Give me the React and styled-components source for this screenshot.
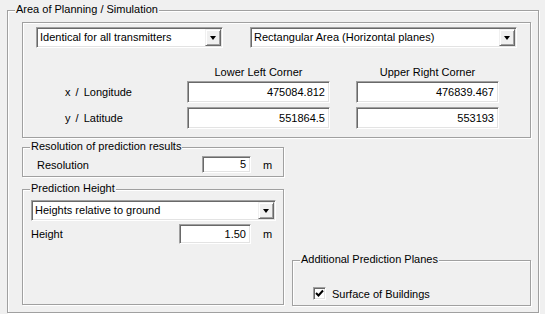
import React from "react";
import styled, { createGlobalStyle } from "styled-components";

const Global = createGlobalStyle`
  html, body {
    margin: 0;
    background: #f0f0f0;
  }
  body {
    font-family: "Liberation Sans", Arial, sans-serif;
    font-size: 11px;
    color: #000;
  }
`;

const Page = styled.div`
  width: 545px;
  height: 314px;
  padding: 10px 0 0 7px;
  box-sizing: border-box;
`;

const Group = styled.div`
  position: relative;
  box-sizing: border-box;
  border: 1px solid #a0a0a0;
  box-shadow: inset 1px 1px #fff, 1px 1px #fff;
  width: ${({ w }) => w}px;
  height: ${({ h }) => h}px;
`;

const Caption = styled.span`
  position: absolute;
  top: -9px;
  left: 7px;
  padding: 0 1px;
  line-height: 14px;
  background: #f0f0f0;
  white-space: nowrap;
`;

const OuterBody = styled.div`
  display: flex;
  flex-direction: column;
  padding: 11px 7px 0 14px;
`;

const AreaBody = styled.div`
  padding: 4px 0 0 13px;
`;

const ComboRow = styled.div`
  display: flex;
  gap: 27px;
`;

const ComboBox = styled.div`
  box-sizing: border-box;
  width: ${({ w }) => w}px;
  height: 21px;
  display: flex;
  align-items: center;
  background: #fff;
  border: 1px solid;
  border-color: #a0a0a0 #fff #fff #a0a0a0;
  box-shadow: inset 1px 1px #696969, inset -1px -1px #e3e3e3;
  padding: 1px 1px 1px 3px;
`;

const ComboText = styled.span`
  flex: 1;
  line-height: 17px;
  white-space: nowrap;
`;

const ArrowButton = styled.div`
  box-sizing: border-box;
  width: 16px;
  height: 17px;
  display: flex;
  align-items: center;
  justify-content: center;
  background: #f0f0f0;
  border: 1px solid;
  border-color: #f0f0f0 #696969 #696969 #f0f0f0;
  box-shadow: inset 1px 1px #fff, inset -1px -1px #a0a0a0;
`;

const Arrow = styled.span`
  width: 0;
  height: 0;
  border-left: 3.5px solid transparent;
  border-right: 3.5px solid transparent;
  border-top: 4px solid #000;
`;

const CoordGrid = styled.div`
  display: grid;
  grid-template-columns: 125px 143px 143px;
  column-gap: 26px;
  row-gap: 4px;
  margin-top: 17px;
  align-items: center;
`;

const ColHead = styled.div`
  text-align: center;
  line-height: 14px;
  margin-bottom: -2px;
`;

const RowLabel = styled.div`
  padding-left: 29px;
  word-spacing: 2px;
`;

const TextField = styled.div`
  box-sizing: border-box;
  width: ${({ w }) => w}px;
  height: ${({ h }) => h}px;
  background: #fff;
  border: 1px solid;
  border-color: #a0a0a0 #fff #fff #a0a0a0;
  box-shadow: inset 1px 1px #696969, inset -1px -1px #e3e3e3;
  padding: 0 4px;
  text-align: right;
  line-height: ${({ h }) => h - 2}px;
`;

const Bottom = styled.div`
  display: flex;
  gap: 8px;
  margin-top: 9px;
  align-items: flex-end;
`;

const LeftCol = styled.div`
  display: flex;
  flex-direction: column;
  gap: 12px;
  margin-bottom: 1px;
`;

const FieldRow = styled.div`
  display: flex;
  align-items: center;
  padding-left: ${({ indent }) => indent}px;
  margin-top: ${({ top }) => top}px;
`;

const FieldLabel = styled.span`
  width: ${({ w }) => w}px;
`;

const Unit = styled.span`
  margin-left: 12px;
`;

const HeightBody = styled.div`
  padding: 10px 0 0 8px;
`;

const CheckRow = styled.label`
  display: flex;
  align-items: center;
  gap: 6px;
  padding: 26px 0 0 20px;
`;

const CheckBox = styled.span`
  box-sizing: border-box;
  width: 13px;
  height: 13px;
  background: #fff;
  border: 1px solid;
  border-color: #a0a0a0 #fff #fff #a0a0a0;
  box-shadow: inset 1px 1px #696969, inset -1px -1px #e3e3e3;
  display: flex;
  align-items: center;
  justify-content: center;
`;

const Combo = ({ w, children }) => (
  <ComboBox w={w}>
    <ComboText>{children}</ComboText>
    <ArrowButton>
      <Arrow />
    </ArrowButton>
  </ComboBox>
);

export default function App() {
  return (
    <>
      <Global />
      <Page>
        <Group w={532} h={303}>
          <Caption>Area of Planning / Simulation</Caption>
          <OuterBody>
            <Group w={509} h={116}>
              <AreaBody>
                <ComboRow>
                  <Combo w={187}>Identical for all transmitters</Combo>
                  <Combo w={267}>Rectangular Area (Horizontal planes)</Combo>
                </ComboRow>
                <CoordGrid>
                  <div />
                  <ColHead>Lower Left Corner</ColHead>
                  <ColHead>Upper Right Corner</ColHead>
                  <RowLabel>x / Longitude</RowLabel>
                  <TextField w={143} h={22}>475084.812</TextField>
                  <TextField w={143} h={22}>476839.467</TextField>
                  <RowLabel>y / Latitude</RowLabel>
                  <TextField w={143} h={22}>551864.5</TextField>
                  <TextField w={143} h={22}>553193</TextField>
                </CoordGrid>
              </AreaBody>
            </Group>
            <Bottom>
              <LeftCol>
                <Group w={262} h={30}>
                  <Caption>Resolution of prediction results</Caption>
                  <FieldRow indent={14} top={8}>
                    <FieldLabel w={165}>Resolution</FieldLabel>
                    <TextField w={49} h={17}>5</TextField>
                    <Unit>m</Unit>
                  </FieldRow>
                </Group>
                <Group w={262} h={116}>
                  <Caption>Prediction Height</Caption>
                  <HeightBody>
                    <Combo w={245}>Heights relative to ground</Combo>
                    <FieldRow indent={0} top={3}>
                      <FieldLabel w={148}>Height</FieldLabel>
                      <TextField w={72} h={20}>1.50</TextField>
                      <Unit>m</Unit>
                    </FieldRow>
                  </HeightBody>
                </Group>
              </LeftCol>
              <Group w={240} h={46}>
                <Caption>Additional Prediction Planes</Caption>
                <CheckRow>
                  <CheckBox>
                    <svg width="9" height="9" viewBox="0 0 9 9">
                      <path d="M1 4 L3.5 6.5 L8 1.5" fill="none" stroke="#000" strokeWidth="2" />
                    </svg>
                  </CheckBox>
                  Surface of Buildings
                </CheckRow>
              </Group>
            </Bottom>
          </OuterBody>
        </Group>
      </Page>
    </>
  );
}
